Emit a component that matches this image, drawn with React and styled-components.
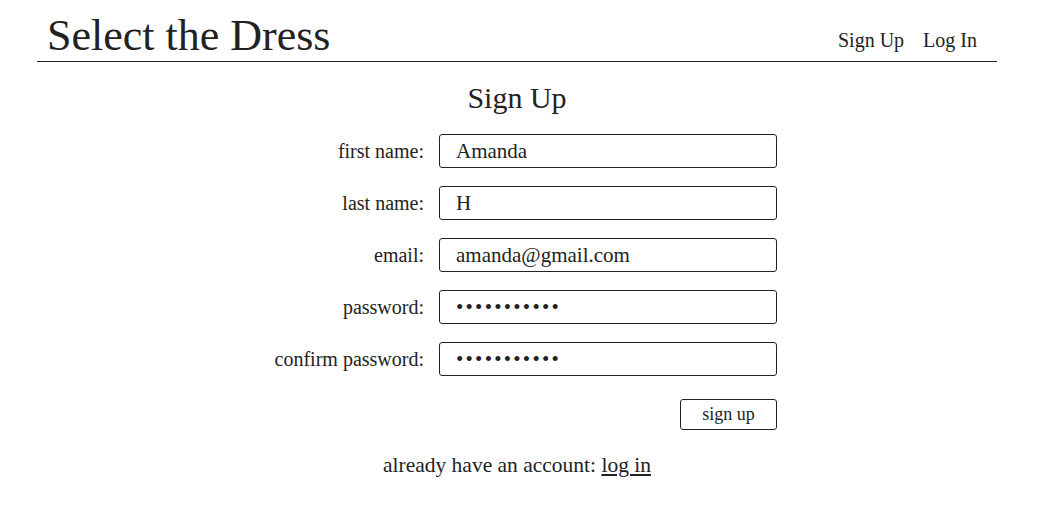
import React from 'react'
import styled, { createGlobalStyle } from 'styled-components'

//Global page styles
const GlobalStyle = createGlobalStyle`
  body {
    margin: 0;
    background: #fff;
    color: #222;
    font-family: "Liberation Serif", "DejaVu Serif", serif;
  }
`

//Styling
const Page = styled.div`
  width: 960px;
  margin-left: 37px;
`
const Header = styled.header`
  display: flex;
  justify-content: space-between;
  align-items: flex-end;
  height: 62px;
  border-bottom: 1px solid #222;
  box-sizing: border-box;
`
const Brand = styled.a`
  font-size: 44px;
  line-height: 1;
  margin-left: 10px;
  margin-bottom: 3px;
  color: #222;
  text-decoration: none;
`
const Nav = styled.nav`
  display: flex;
  gap: 19px;
  margin-right: 20px;
  margin-bottom: 9px;
`
const NavLink = styled.a`
  font-size: 20px;
  color: #222;
  text-decoration: none;
`
const Title = styled.h1`
  margin: 18px 0 18px;
  font-size: 30px;
  font-weight: normal;
  text-align: center;
  line-height: 36px;
`
const Form = styled.form`
  display: grid;
  grid-template-columns: 167px 338px;
  column-gap: 15px;
  row-gap: 18px;
  justify-content: center;
  align-items: center;
`
const Label = styled.label`
  text-align: right;
  font-size: 20px;
`
const Input = styled.input`
  box-sizing: border-box;
  height: 34px;
  width: 338px;
  padding: 0 16px;
  border: 1px solid #222;
  border-radius: 3px;
  font-family: inherit;
  font-size: 21px;
  color: #222;
  letter-spacing: ${p => (p.type === 'password' ? '2.2px' : '0')};
`
const ButtonRow = styled.div`
  grid-column: 2;
  display: flex;
  justify-content: flex-end;
  margin-top: 5px;
`
const Button = styled.button`
  box-sizing: border-box;
  width: 97px;
  height: 31px;
  background: #fff;
  border: 1px solid #222;
  border-radius: 3px;
  font-family: inherit;
  font-size: 18px;
  color: #222;
`
const Footer = styled.p`
  margin: 23px 0 0;
  text-align: center;
  font-size: 21.5px;
`
const FooterLink = styled.a`
  color: #222;
  text-decoration: underline;
`

const fields = [
  { label: 'first name:', type: 'text', value: 'Amanda' },
  { label: 'last name:', type: 'text', value: 'H' },
  { label: 'email:', type: 'email', value: 'amanda@gmail.com' },
  { label: 'password:', type: 'password', value: 'password123' },
  { label: 'confirm password:', type: 'password', value: 'password123' },
]

//Sign up page
function App() {
  return (
    <React.Fragment>
      <GlobalStyle />
      <Page>
        <Header>
          <Brand href="#">Select the Dress</Brand>
          <Nav>
            <NavLink href="#">Sign Up</NavLink>
            <NavLink href="#">Log In</NavLink>
          </Nav>
        </Header>
        <Title>Sign Up</Title>
        <Form onSubmit={e => e.preventDefault()}>
          {fields.map(f => (
            <React.Fragment key={f.label}>
              <Label>{f.label}</Label>
              <Input type={f.type} defaultValue={f.value} />
            </React.Fragment>
          ))}
          <ButtonRow>
            <Button type="submit">sign up</Button>
          </ButtonRow>
        </Form>
        <Footer>
          already have an account: <FooterLink href="#">log in</FooterLink>
        </Footer>
      </Page>
    </React.Fragment>
  )
}

export default App
